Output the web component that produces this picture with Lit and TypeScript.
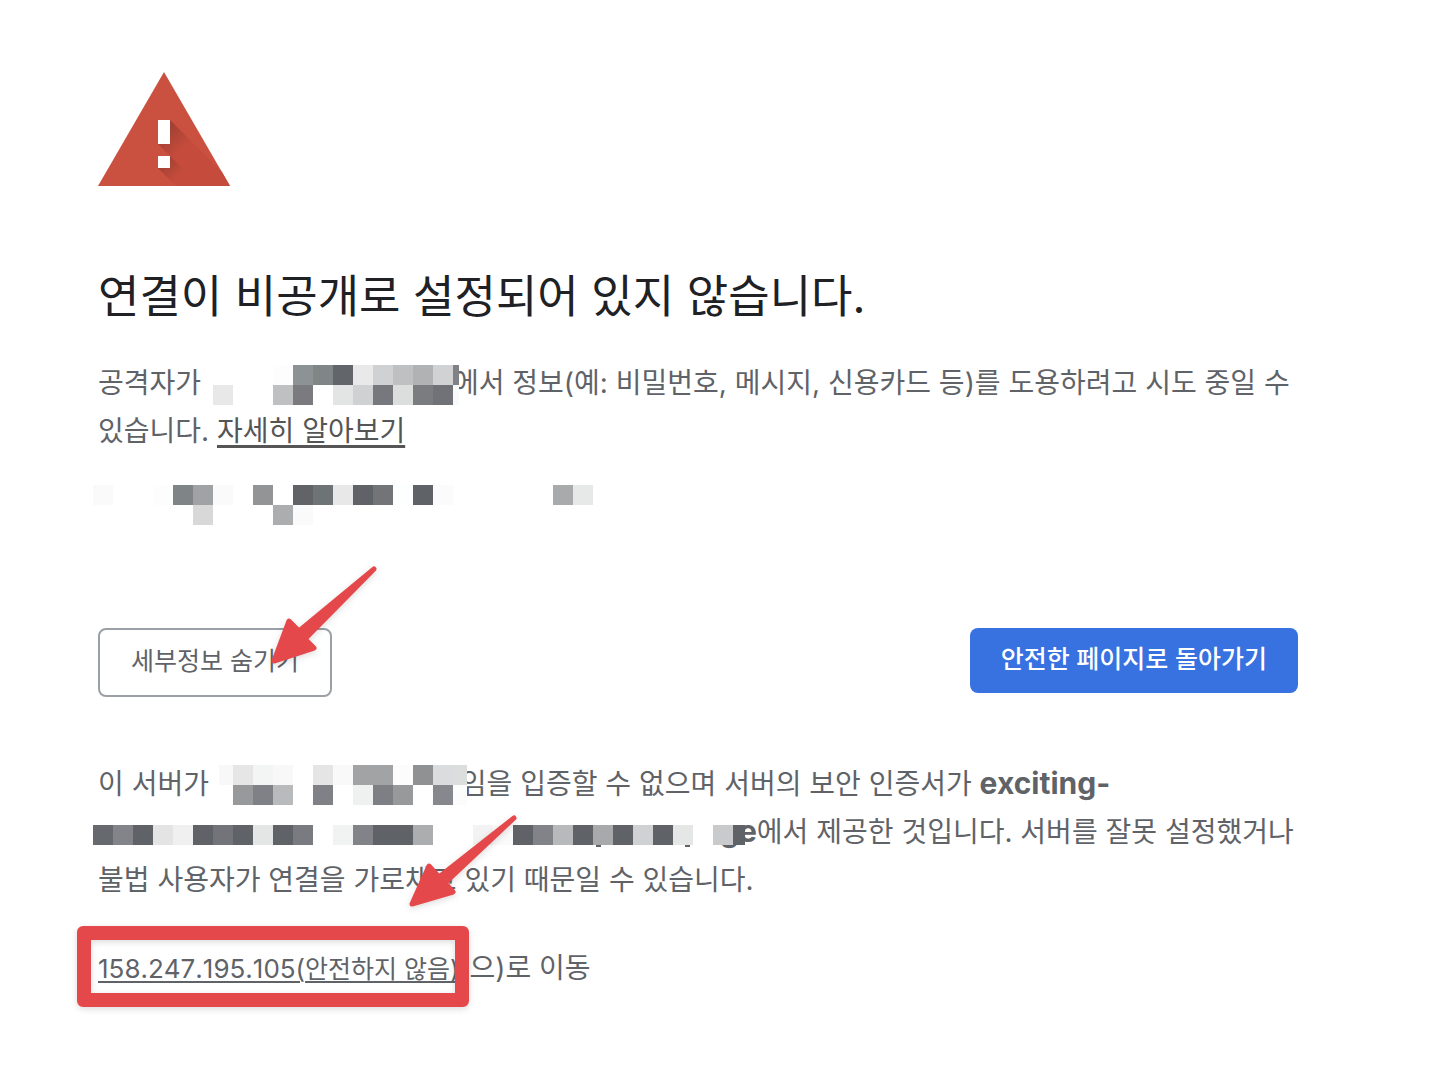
import { LitElement, html, svg, css } from "lit";
import { customElement, property } from "lit/decorators.js";

/** One tile of a mosaic: x, y, colour and, if it is not a full tile, its width and height. */
type Tile = [number, number, string, number?, number?];

const TILE = 20;

const ATTACKER_TILES: Tile[] = [
  [180, 0, "#fdfdfd"], [200, 0, "#8d9294"], [220, 0, "#808586"], [240, 0, "#62666b"],
  [260, 0, "#e9e9e9"], [280, 0, "#d0d1d3"], [300, 0, "#bfc0c2"], [320, 0, "#b0b2b3"],
  [340, 0, "#d1d2d4"], [360, 0, "#808286", 6],
  [120, 20, "#e8e8e8"], [180, 20, "#bfc0c2"], [200, 20, "#7a7a7f"], [220, 20, "#ffffff"],
  [240, 20, "#e3e5e4"], [260, 20, "#d0d1d3"], [280, 20, "#77787d"], [300, 20, "#dcdedd"],
  [320, 20, "#7b7c80"], [340, 20, "#717277"], [360, 20, "#f8f9f9", 6],
];

const CODE_TILES: Tile[] = [
  [0, 0, "#fafafa"], [60, 0, "#fdfdfd"], [80, 0, "#7f8486"], [100, 0, "#a1a2a4"],
  [120, 0, "#fafafa"], [160, 0, "#939496"], [200, 0, "#626367"], [220, 0, "#6e7376"],
  [240, 0, "#e8e8e8"], [260, 0, "#5f6368"], [280, 0, "#737478"], [300, 0, "#fcfffe"],
  [320, 0, "#5f6368"], [340, 0, "#fbfbfb"], [460, 0, "#a9aaab"], [480, 0, "#e7e9e8"],
  [100, 20, "#d8d8d8"], [180, 20, "#acadaf"], [200, 20, "#fafafa"],
];

const SERVER_TILES: Tile[] = [
  [126, 0, "#f8f8f8", 14], [140, 0, "#e6e6e6"], [160, 0, "#f3f5f4"], [180, 0, "#f8f8f8"],
  [220, 0, "#e5e5e5"], [240, 0, "#f9f9f9"], [260, 0, "#a1a3a5"], [280, 0, "#a1a3a5"],
  [300, 0, "#fcfcfc"], [320, 0, "#8f9193"], [340, 0, "#dadcdd"], [360, 0, "#dcdedd", 14],
  [140, 20, "#98999b"], [160, 20, "#808186"], [180, 20, "#b9babc"], [220, 20, "#808186"],
  [260, 20, "#eff1f0"], [280, 20, "#7e7f84"], [300, 20, "#98999b"], [320, 20, "#ffffff"],
  [340, 20, "#87888d"], [360, 20, "#fcfcfc", 14],
  [0, 60, "#666a6e"], [20, 60, "#838489"], [40, 60, "#5f6368"], [60, 60, "#e4e4e4"],
  [80, 60, "#f0f0f0"], [100, 60, "#5f6368"], [120, 60, "#737479"], [140, 60, "#5f6368"],
  [160, 60, "#e3e6e4"], [180, 60, "#5f6368"], [200, 60, "#7a7b80"], [240, 60, "#f1f3f2"],
  [260, 60, "#828388"], [280, 60, "#5f6368"], [300, 60, "#5f6368"], [320, 60, "#acadaf"],
  [380, 60, "#f3f3f3"], [400, 60, "#fafafa"], [420, 60, "#5f6368"], [440, 60, "#828388"],
  [460, 60, "#b8b9bb"], [480, 60, "#5f6368"], [500, 60, "#a8a9ab"], [520, 60, "#5f6368"],
  [540, 60, "#d0d1d3"], [560, 60, "#5f6368"], [580, 60, "#e5e7e6"], [600, 60, "#ffffff"],
  [620, 60, "#c9cacc"], [640, 60, "#5f6368", 12],
  [503, 80, "#5f6368", 5, 2], [592, 80, "#5f6368", 5, 2],
];

/** A block of coloured tiles that hides what is below it. */
@customElement("pixel-mosaic")
class PixelMosaic extends LitElement {
  @property({ attribute: false }) tiles: Tile[] = [];

  static styles = css`
    :host {
      display: block;
      pointer-events: none;
    }
    .tiles {
      display: block;
    }
  `;

  render() {
    const width = Math.max(...this.tiles.map(([x, , , w]) => x + (w ?? TILE)));
    const height = Math.max(...this.tiles.map(([, y, , , h]) => y + (h ?? TILE)));
    return html`<svg class="tiles" width=${width} height=${height} aria-hidden="true" shape-rendering="crispEdges">
      ${this.tiles.map(
        ([x, y, fill, w, h]) =>
          svg`<rect x=${x} y=${y} width=${w ?? TILE} height=${h ?? TILE} fill=${fill}></rect>`,
      )}
    </svg>`;
  }
}

/** A red arrow that points down and left at its target. */
@customElement("callout-arrow")
class CalloutArrow extends LitElement {
  @property() points = "";

  static styles = css`
    :host {
      display: block;
      pointer-events: none;
    }
    .arrow {
      display: block;
      overflow: visible;
      fill: #e5484b;
      stroke: #e5484b;
      stroke-width: 5;
      stroke-linejoin: round;
      filter: drop-shadow(0 2px 3px rgba(0, 0, 0, 0.14));
    }
  `;

  render() {
    return html`<svg class="arrow" width="108" height="100" viewBox="0 0 108 100" aria-hidden="true">
      <polygon points=${this.points}></polygon>
    </svg>`;
  }
}

@customElement("app-root")
class AppRoot extends LitElement {
  static styles = css`
    :host {
      display: block;
      min-height: 100vh;
      box-sizing: border-box;
      padding: 72px 132px 72px 98px;
      background: #ffffff;
      color: #5f6368;
      font-family: Inter, "Noto Sans CJK KR", sans-serif;
      font-size: 28px;
      line-height: 48px;
    }
    .warning {
      display: block;
    }
    h1 {
      margin: 81px 0 0;
      color: #202124;
      font-size: 45px;
      font-weight: 400;
      line-height: 60px;
    }
    p {
      margin: 0;
      position: relative;
    }
    b {
      font-size: 30px;
      line-height: 40px;
    }
    a {
      color: inherit;
      text-decoration: underline;
      text-decoration-thickness: 2px;
      text-underline-offset: 4px;
    }
    .summary {
      margin-top: 32px;
    }
    .learn {
      color: #555555;
      text-decoration-thickness: 3px;
    }
    .gap {
      display: inline-block;
      height: 1px;
    }
    .gap-site {
      width: 244px;
    }
    .gap-server {
      width: 244px;
    }
    .gap-name {
      width: 622px;
    }
    .cover {
      position: absolute;
      left: -5px;
      top: 6px;
    }
    .cover-server {
      top: 5px;
    }
    .code {
      margin: 30px 0 0 -5px;
    }
    .actions {
      display: flex;
      justify-content: space-between;
      align-items: flex-start;
      margin-top: 103px;
    }
    button {
      border: 0;
      border-radius: 8px;
      padding: 11px 31px 14px;
      background: #3871e0;
      color: #ffffff;
      font: inherit;
      font-size: 25px;
      font-weight: 500;
      line-height: 40px;
      cursor: pointer;
    }
    .details-toggle {
      border: 2px solid #9aa0a6;
      background: #ffffff;
      color: #5f6368;
      font-weight: 400;
    }
    .pointed {
      position: relative;
    }
    .arrow-toggle {
      position: absolute;
      left: 171px;
      top: -64px;
    }
    .explanation {
      margin-top: 63px;
    }
    .arrow-link {
      position: absolute;
      left: 309px;
      top: 53px;
    }
    .proceed {
      margin-top: 40px;
    }
    .proceed a {
      font-size: 25px;
      text-underline-offset: 3px;
    }
    .address {
      font-size: 26px;
      font-kerning: none;
    }
    .frame {
      position: absolute;
      left: -21px;
      top: -18px;
      width: 392px;
      height: 81px;
      box-sizing: border-box;
      border: 14px solid #e5484b;
      border-radius: 6px;
      filter: drop-shadow(0 2px 3px rgba(0, 0, 0, 0.14));
      pointer-events: none;
    }
  `;

  render() {
    return html`
      <main>
        <svg class="warning" width="132" height="114" viewBox="0 0 132 114" role="img" aria-label="경고">
          <defs>
            <linearGradient id="bar" gradientUnits="userSpaceOnUse" x1="66" y1="60" x2="84" y2="78">
              <stop offset="0" stop-color="#8f3a30" stop-opacity="0.65"></stop>
              <stop offset="1" stop-color="#8f3a30" stop-opacity="0"></stop>
            </linearGradient>
            <linearGradient id="dot" gradientUnits="userSpaceOnUse" x1="66" y1="90" x2="80" y2="104">
              <stop offset="0" stop-color="#8f3a30" stop-opacity="0.65"></stop>
              <stop offset="1" stop-color="#8f3a30" stop-opacity="0"></stop>
            </linearGradient>
          </defs>
          <path d="M66 0 132 114H0z" fill="#ca5140"></path>
          <path d="M72 48 124 100 132 114H78L60 96 72 84 60 72z" fill="#c54c3c"></path>
          <path d="M72 48 104 80 92 104 60 72z" fill="url(#bar)"></path>
          <path d="M72 84 102 114H78L60 96z" fill="url(#dot)"></path>
          <path d="M60 48h12v24H60zM60 84h12v12H60z" fill="#ffffff"></path>
        </svg>

        <h1>연결이 비공개로 설정되어 있지 않습니다.</h1>

        <p class="summary">
          공격자가 <span class="gap gap-site"></span>에서 정보(예: 비밀번호, 메시지, 신용카드 등)를 도용하려고 시도 중일 수
          있습니다. <a class="learn" href="#learn">자세히 알아보기</a>
          <pixel-mosaic class="cover" .tiles=${ATTACKER_TILES}></pixel-mosaic>
        </p>

        <pixel-mosaic class="code" .tiles=${CODE_TILES}></pixel-mosaic>

        <div class="actions">
          <div class="pointed">
            <button class="details-toggle" type="button">세부정보 숨기기</button>
            <callout-arrow
              class="arrow-toggle"
              points="105,5 36,75 45,84 5,97 20,57 30,67"
            ></callout-arrow>
          </div>
          <button type="button">안전한 페이지로 돌아가기</button>
        </div>

        <p class="explanation">
          이 서버가 <span class="gap gap-server"></span>임을 입증할 수 없으며 서버의 보안 인증서가
          <b>exciting-<span class="gap gap-name"></span>ge</b>에서 제공한 것입니다. 서버를 잘못 설정했거나 불법 사용자가 연결을
          가로채고 있기 때문일 수 있습니다.
          <pixel-mosaic class="cover cover-server" .tiles=${SERVER_TILES}></pixel-mosaic>
          <callout-arrow
            class="arrow-link"
            points="107,5 38,70 46,79 5,91 22,53 32,64"
          ></callout-arrow>
        </p>

        <p class="proceed">
          <a href="#proceed"><span class="address">158.247.195.105(</span>안전하지 않음)</a>(으)로 이동
          <span class="frame"></span>
        </p>
      </main>
    `;
  }
}
